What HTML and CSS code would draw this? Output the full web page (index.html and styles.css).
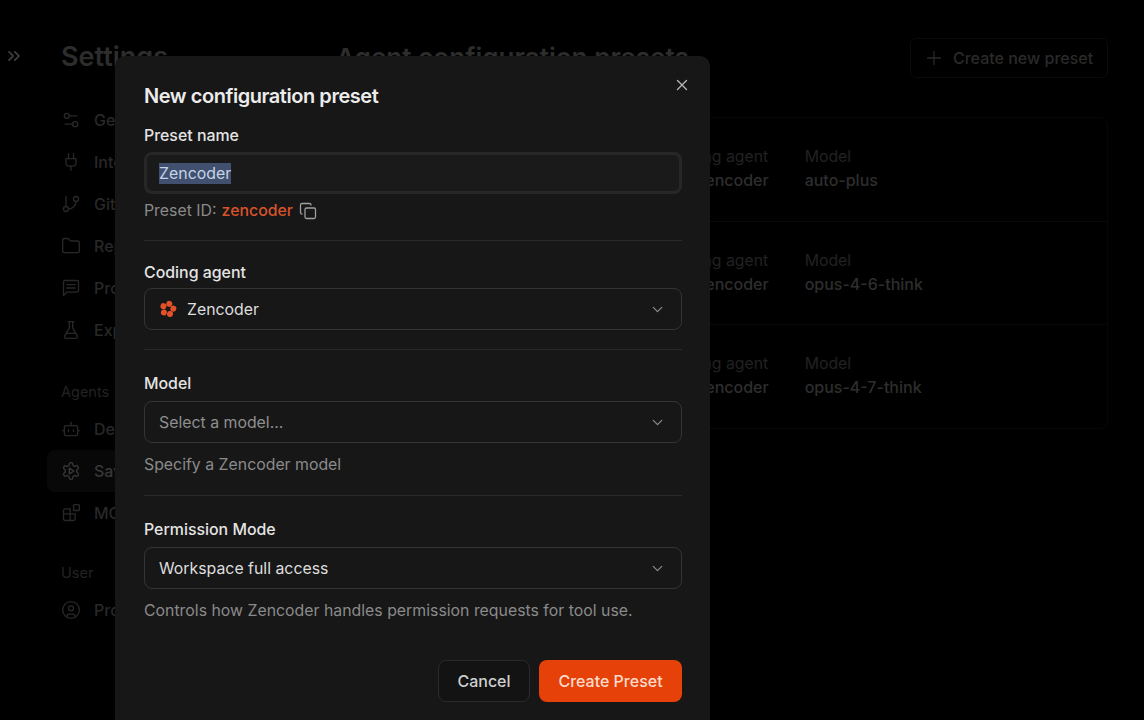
FILE: index.html
```html
<!DOCTYPE html>
<html>
  <head>
    <title>Settings</title>
    <link rel="stylesheet" href="styles.css">
  </head>
  <body>
    <div class="app">
      <div class="rail">
        <svg class="rail-icon" viewBox="0 0 24 24"><path d="m6 17 5-5-5-5"/><path d="m13 17 5-5-5-5"/></svg>
      </div>

      <aside class="sidebar">
        <h2 class="page-title">Settings</h2>
        <nav class="nav">
          <div class="nav-item">
            <svg viewBox="0 0 24 24"><path d="M14 17H5"/><path d="M19 7h-9"/><circle cx="17" cy="17" r="3"/><circle cx="7" cy="7" r="3"/></svg>
            <span>General</span>
          </div>
          <div class="nav-item">
            <svg viewBox="0 0 24 24"><path d="M12 22v-5"/><path d="M9 8V2"/><path d="M15 8V2"/><path d="M18 8v5a4 4 0 0 1-4 4h-4a4 4 0 0 1-4-4V8Z"/></svg>
            <span>Integrations</span>
          </div>
          <div class="nav-item">
            <svg viewBox="0 0 24 24"><path d="M6 3v12"/><circle cx="18" cy="6" r="3"/><circle cx="6" cy="18" r="3"/><path d="M18 9a9 9 0 0 1-9 9"/></svg>
            <span>Git</span>
          </div>
          <div class="nav-item">
            <svg viewBox="0 0 24 24"><path d="M20 20a2 2 0 0 0 2-2V8a2 2 0 0 0-2-2h-7.9a2 2 0 0 1-1.69-.9L9.6 3.9A2 2 0 0 0 7.93 3H4a2 2 0 0 0-2 2v13a2 2 0 0 0 2 2Z"/></svg>
            <span>Repositories</span>
          </div>
          <div class="nav-item">
            <svg viewBox="0 0 24 24"><path d="M21 15a2 2 0 0 1-2 2H7l-4 4V5a2 2 0 0 1 2-2h14a2 2 0 0 1 2 2z"/><path d="M7 8h10"/><path d="M7 12h10"/></svg>
            <span>Prompts</span>
          </div>
          <div class="nav-item">
            <svg viewBox="0 0 24 24"><path d="M10 2v7.5L4.5 19a2 2 0 0 0 1.7 3h11.6a2 2 0 0 0 1.7-3L14 9.5V2"/><path d="M8.5 2h7"/><path d="M7 16h10"/></svg>
            <span>Experiments</span>
          </div>
        </nav>

        <div class="nav-label">Agents</div>
        <nav class="nav">
          <div class="nav-item">
            <svg viewBox="0 0 24 24"><path d="M12 8V4"/><rect x="4" y="8" width="16" height="12" rx="2"/><path d="M2 14h2"/><path d="M20 14h2"/><path d="M9 13v2"/><path d="M15 13v2"/></svg>
            <span>Defaults</span>
          </div>
          <div class="nav-item active">
            <svg viewBox="0 0 24 24"><path d="M12.2 2h-.4a2 2 0 0 0-2 2v.2a2 2 0 0 1-1 1.7l-.4.3a2 2 0 0 1-2 0l-.2-.1a2 2 0 0 0-2.7.7l-.2.4a2 2 0 0 0 .7 2.7l.2.1a2 2 0 0 1 1 1.7v.5a2 2 0 0 1-1 1.7l-.2.2a2 2 0 0 0-.7 2.7l.2.3a2 2 0 0 0 2.7.8l.2-.1a2 2 0 0 1 2 0l.4.2a2 2 0 0 1 1 1.8v.2a2 2 0 0 0 2 2h.4a2 2 0 0 0 2-2v-.2a2 2 0 0 1 1-1.7l.4-.3a2 2 0 0 1 2 0l.2.1a2 2 0 0 0 2.7-.7l.2-.4a2 2 0 0 0-.7-2.7l-.2-.1a2 2 0 0 1-1-1.7v-.5a2 2 0 0 1 1-1.7l.2-.2a2 2 0 0 0 .7-2.7l-.2-.3a2 2 0 0 0-2.7-.8l-.2.1a2 2 0 0 1-2 0l-.4-.2a2 2 0 0 1-1-1.8V4a2 2 0 0 0-2-2Z"/><path d="M10 8.5v7l5.5-3.5Z"/></svg>
            <span>Saved</span>
          </div>
          <div class="nav-item">
            <svg viewBox="0 0 24 24"><rect x="15" y="2" width="7" height="7" rx="1"/><path d="M11 7H5a2 2 0 0 0-2 2v10a2 2 0 0 0 2 2h10a2 2 0 0 0 2-2v-6H3"/><path d="M11 7v14"/></svg>
            <span>MCP</span>
          </div>
        </nav>

        <div class="nav-label user-label">User</div>
        <nav class="nav">
          <div class="nav-item">
            <svg viewBox="0 0 24 24"><circle cx="12" cy="12" r="10"/><circle cx="12" cy="10" r="3"/><path d="M7 20.7v-.7a3 3 0 0 1 3-3h4a3 3 0 0 1 3 3v.7"/></svg>
            <span>Profile</span>
          </div>
        </nav>
      </aside>

      <main class="main">
        <div class="main-head">
          <h2 class="page-title">Agent configuration presets</h2>
          <div class="new-btn">
            <svg viewBox="0 0 24 24"><path d="M5 12h14"/><path d="M12 5v14"/></svg>
            Create new preset
          </div>
        </div>

        <div class="preset-list">
          <div class="preset">
            <div class="meta">
              <div class="meta-label">Coding agent</div>
              <div class="meta-value agent-value">Zencoder</div>
            </div>
            <div class="meta">
              <div class="meta-label">Model</div>
              <div class="meta-value">auto-plus</div>
            </div>
          </div>
          <div class="preset">
            <div class="meta">
              <div class="meta-label">Coding agent</div>
              <div class="meta-value agent-value">Zencoder</div>
            </div>
            <div class="meta">
              <div class="meta-label">Model</div>
              <div class="meta-value">opus-4-6-think</div>
            </div>
          </div>
          <div class="preset">
            <div class="meta">
              <div class="meta-label">Coding agent</div>
              <div class="meta-value agent-value">Zencoder</div>
            </div>
            <div class="meta">
              <div class="meta-label">Model</div>
              <div class="meta-value">opus-4-7-think</div>
            </div>
          </div>
        </div>
      </main>
    </div>

    <div class="modal">
      <svg class="close-icon" viewBox="0 0 24 24"><path d="M18 6 6 18"/><path d="m6 6 12 12"/></svg>
      <h1 class="modal-title">New configuration preset</h1>

      <label class="field-label name-label">Preset name</label>
      <div class="text-input"><span class="selected">Zencoder</span></div>
      <div class="preset-id">
        Preset ID: <span class="id-value">zencoder</span>
        <svg class="copy-icon" viewBox="0 0 24 24"><rect x="8" y="8" width="14" height="14" rx="2"/><path d="M4 16c-1.1 0-2-.9-2-2V4c0-1.1.9-2 2-2h10c1.1 0 2 .9 2 2"/></svg>
      </div>

      <hr class="divider">

      <label class="field-label coding-label">Coding agent</label>
      <div class="select">
        <svg class="agent-logo" viewBox="0 0 24 24">
          <g fill="#e2512a" transform="rotate(14 12 12)">
            <circle cx="12" cy="4.9" r="4"/>
            <circle cx="18.8" cy="9.8" r="4"/>
            <circle cx="16.2" cy="17.8" r="4"/>
            <circle cx="7.8" cy="17.8" r="4"/>
            <circle cx="5.2" cy="9.8" r="4"/>
          </g>
          <circle cx="12" cy="12" r="2.4" fill="#171717"/>
        </svg>
        <span class="select-value">Zencoder</span>
        <svg class="chevron" viewBox="0 0 24 24"><path d="m6 9 6 6 6-6"/></svg>
      </div>

      <hr class="divider">

      <label class="field-label">Model</label>
      <div class="select">
        <span class="select-value placeholder">Select a model...</span>
        <svg class="chevron" viewBox="0 0 24 24"><path d="m6 9 6 6 6-6"/></svg>
      </div>
      <div class="help">Specify a Zencoder model</div>

      <hr class="divider">

      <label class="field-label">Permission Mode</label>
      <div class="select">
        <span class="select-value">Workspace full access</span>
        <svg class="chevron" viewBox="0 0 24 24"><path d="m6 9 6 6 6-6"/></svg>
      </div>
      <div class="help">Controls how Zencoder handles permission requests for tool use.</div>

      <div class="modal-actions">
        <button class="btn btn-cancel">Cancel</button>
        <button class="btn btn-create">Create Preset</button>
      </div>
    </div>
  </body>
</html>
```

FILE: styles.css
```css
html,
body {
  height: 100%;
  margin: 0;
  overflow: hidden;
}

body {
  background-color: #000;
  font-family: Inter, "Liberation Sans", sans-serif;
  color: #2a2a2a;
  position: relative;
}

svg {
  fill: none;
  stroke: currentColor;
  stroke-width: 2;
  stroke-linecap: round;
  stroke-linejoin: round;
}

.app {
  display: flex;
  height: 100%;
}

.rail {
  width: 47px;
  flex: none;
  padding-top: 46px;
  box-sizing: border-box;
}

.rail-icon {
  display: block;
  width: 20px;
  height: 20px;
  margin-left: 4px;
  color: #414141;
}

.sidebar {
  width: 289px;
  flex: none;
  padding-top: 41px;
  box-sizing: border-box;
}

.page-title {
  margin: 0;
  font-size: 26.1px;
  line-height: 32px;
  font-weight: 600;
  color: #2d2d2d;
}

.sidebar .page-title {
  margin: 0 0 26px 14px;
  font-size: 27px;
}

.nav-item {
  display: flex;
  align-items: center;
  gap: 13px;
  height: 42px;
  padding-left: 14px;
  font-size: 16px;
  font-weight: 500;
  border-radius: 8px;
  color: #282828;
}

.nav-item svg {
  width: 20px;
  height: 20px;
  flex: none;
  stroke-width: 1.6;
}

.nav-item.active {
  background-color: #080808;
  color: #383838;
}

.nav-label {
  margin: 31px 0 6px 14px;
  font-size: 14.5px;
  line-height: 20px;
  color: #232323;
}

.user-label {
  margin-top: 29px;
}

.main {
  flex: 1;
  padding: 38px 36px 0 0;
}

.main-head {
  display: flex;
  justify-content: space-between;
  align-items: center;
  height: 40px;
}

.new-btn {
  display: flex;
  align-items: center;
  gap: 8px;
  width: 198px;
  height: 40px;
  box-sizing: border-box;
  padding-left: 12px;
  border: 1px solid #0b0b0b;
  border-radius: 6px;
  font-size: 16px;
  font-weight: 500;
}

.new-btn svg {
  width: 22px;
  height: 22px;
  stroke-width: 1.4;
}

.preset-list {
  margin-top: 39px;
  border: 1px solid #070707;
  border-radius: 8px;
}

.preset {
  display: flex;
  gap: 36px;
  align-items: center;
  height: 102.6px;
  padding-left: 331px;
  border-bottom: 1px solid #090909;
}

.preset:last-child {
  border-bottom: none;
}

.meta-label {
  font-size: 15.8px;
  line-height: 22px;
  color: #222222;
}

.meta-value {
  font-size: 16px;
  line-height: 24px;
  font-weight: 500;
  color: #2e2e2e;
}

.agent-value {
  padding-left: 27px;
}

/* Dialog sits over the dimmed page and runs off the bottom */
.modal {
  position: absolute;
  left: 115px;
  top: 56px;
  width: 595px;
  box-sizing: border-box;
  padding: 28px 28px 40px 29px;
  background-color: #171717;
  border-radius: 10px;
  color: #e6e6e6;
}

.close-icon {
  position: absolute;
  right: 19px;
  top: 20px;
  width: 18px;
  height: 18px;
  color: #b5b5b5;
  stroke-width: 1.8;
}

.modal-title {
  margin: 0;
  font-size: 20px;
  line-height: 24px;
  font-weight: 600;
  letter-spacing: -0.45px;
  color: #ececec;
}

.field-label {
  display: block;
  margin-bottom: 7px;
  font-size: 15.9px;
  line-height: 20px;
  font-weight: 500;
  color: #e4e4e4;
}

.name-label {
  margin-top: 18px;
  margin-bottom: 6px;
}

.coding-label {
  margin-bottom: 5px;
}

.text-input {
  display: flex;
  align-items: center;
  height: 42px;
  box-sizing: border-box;
  padding-left: 12px;
  background-color: #1a1a1a;
  border: 3px solid #272727;
  border-radius: 8px;
  font-size: 15.9px;
}

.selected {
  background-color: #40506e;
  color: #c5d3e8;
  line-height: 21px;
}

.preset-id {
  display: flex;
  align-items: center;
  margin-top: 7px;
  font-size: 15.85px;
  line-height: 20px;
  color: #8a8a8a;
}

.id-value {
  margin-left: 5px;
  color: #d8532a;
  font-weight: 500;
}

.copy-icon {
  width: 18px;
  height: 18px;
  margin-left: 6px;
  color: #a0a0a0;
  stroke-width: 1.7;
}

.divider {
  margin: 19px 0 24px;
  border: none;
  border-top: 1px solid #2a2a2a;
}

.preset-id + .divider {
  margin-bottom: 22px;
}

.help + .divider {
  margin-top: 20px;
}

.select {
  display: flex;
  align-items: center;
  height: 42px;
  box-sizing: border-box;
  padding: 0 15px 0 14px;
  border: 1px solid #343434;
  border-radius: 8px;
  font-size: 15.85px;
}

.agent-logo {
  width: 18px;
  height: 18px;
  margin-right: 10px;
  stroke: none;
}

.select-value {
  flex: 1;
  color: #dedede;
}

.select-value.placeholder {
  color: #8f8f8f;
}

.chevron {
  width: 17px;
  height: 17px;
  color: #8a8a8a;
  stroke-width: 1.8;
}

.help {
  margin-top: 12px;
  font-size: 15.85px;
  line-height: 20px;
  color: #8a8a8a;
}

.modal-actions {
  display: flex;
  justify-content: flex-end;
  gap: 9px;
  margin-top: 39px;
}

.btn {
  height: 42px;
  border-radius: 8px;
  font-family: inherit;
  font-size: 16px;
  font-weight: 500;
  cursor: pointer;
}

.btn-cancel {
  width: 92px;
  background-color: #131313;
  border: 1px solid #2b2b2b;
  color: #cfcfcf;
}

.btn-create {
  width: 143px;
  background-color: #e64108;
  border: none;
  color: #fbdccb;
}
```
